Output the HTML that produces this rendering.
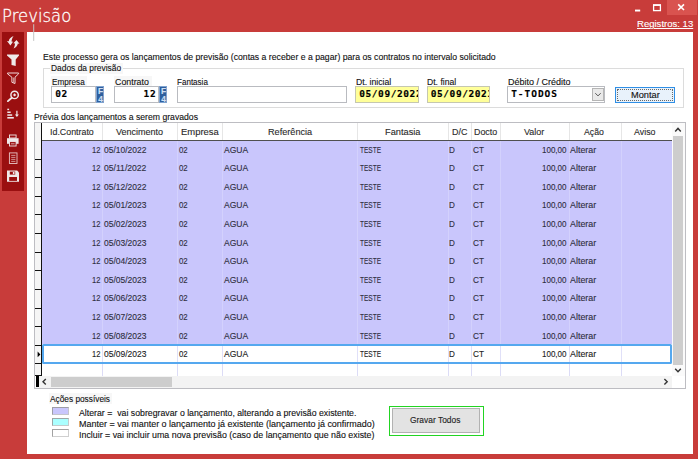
<!DOCTYPE html>
<html lang="pt-BR"><head><meta charset="utf-8"><title>Previsão</title>
<style>
html,body{margin:0;padding:0}
body{width:698px;height:459px;overflow:hidden;background:#c83c3a;position:relative}
.t{position:absolute;white-space:pre;line-height:20px;height:20px;transform-origin:0 0;-webkit-text-stroke:0.12px currentColor}
.a{position:absolute;box-sizing:border-box}
.inp{position:absolute;box-sizing:border-box;background:#fff;border:1px solid #b9bbc0}
.f4{position:absolute;box-sizing:border-box;background:#2f5f9e;border:1px solid #7fa3d0}
.lb{position:absolute;background:#f7f7f7}
</style></head><body>
<div class="a" style="left:667px;top:0px;width:30px;height:15px;background:#d9534f"></div>
<svg class="a" style="left:630px;top:0" width="68" height="16" viewBox="0 0 68 16"><rect x="5" y="9.6" width="5.2" height="1.9" fill="#fff"/><rect x="23.6" y="5.2" width="6.8" height="5.4" fill="none" stroke="#fff" stroke-width="1.3"/><rect x="23" y="4.2" width="8" height="1.6" fill="#fff"/><path d="M48.2 4.4 L54 10 M54 4.4 L48.2 10" stroke="#fff" stroke-width="1.6" fill="none"/></svg>
<div class="a" style="left:2px;top:32px;width:22px;height:159px;background:#9a0f10"></div>
<div class="a" style="left:27px;top:32px;width:666px;height:422px;background:#fff"></div>
<svg class="a" style="left:30px;top:20px" width="8" height="24" viewBox="30 20 8 24"><rect x="33.2" y="24.2" width="1" height="16.7" fill="#c4c4c4"/></svg>
<div class="a" style="left:43px;top:68px;width:641px;height:40px;border:1px solid #dcdcdc"></div>
<div class="lb" style="left:50px;top:63px;width:73px;height:11px;"></div>
<div class="lb" style="left:51px;top:76px;width:36px;height:11px;"></div>
<div class="lb" style="left:114px;top:76px;width:38px;height:11px;"></div>
<div class="inp" style="left:51px;top:86px;width:45px;height:17px;"></div>
<div class="f4" style="left:96px;top:86px;width:8px;height:17px;"></div>
<div class="inp" style="left:114px;top:86px;width:45px;height:17px;"></div>
<div class="f4" style="left:159px;top:86px;width:8px;height:17px;"></div>
<div class="inp" style="left:177px;top:86px;width:170px;height:17px;"></div>
<div class="inp" style="left:355px;top:86px;width:64px;height:17px;background:#ffff99;border-color:#c5c7b0"></div>
<div class="inp" style="left:427px;top:86px;width:63px;height:17px;background:#ffff99;border-color:#c5c7b0"></div>
<div class="inp" style="left:507px;top:86px;width:98px;height:17px;"></div>
<div class="a" style="left:592px;top:88px;width:12px;height:13px;background:#e9e9e9;border:1px solid #b5b5b5"></div>
<svg class="a" style="left:592px;top:88px" width="12" height="13" viewBox="0 0 12 13"><path d="M3.3 5.2 L6 7.9 L8.7 5.2" stroke="#555" stroke-width="1" fill="none"/></svg>
<div class="a" style="left:615px;top:87px;width:60px;height:16px;background:#e8f2fb;border:1px solid #2f8fe6"></div>
<div class="a" style="left:617px;top:89px;width:56px;height:12px;border:1px dotted #6a6a6a"></div>
<div class="a" style="left:34px;top:122px;width:652px;height:267px;background:#fff;border:1px solid #bdbdc2"></div>
<div class="a" style="left:42px;top:141px;width:630px;height:203px;background:#c9c6fc"></div>
<div class="a" style="left:102px;top:141px;width:1px;height:204px;background:#d3d1fd"></div>
<div class="a" style="left:102px;top:123px;width:1px;height:17px;background:#e6e6e6"></div>
<div class="a" style="left:102px;top:344px;width:1px;height:32px;background:#dcdcf6"></div>
<div class="a" style="left:177px;top:141px;width:1px;height:204px;background:#d3d1fd"></div>
<div class="a" style="left:177px;top:123px;width:1px;height:17px;background:#e6e6e6"></div>
<div class="a" style="left:177px;top:344px;width:1px;height:32px;background:#dcdcf6"></div>
<div class="a" style="left:222px;top:141px;width:1px;height:204px;background:#d3d1fd"></div>
<div class="a" style="left:222px;top:123px;width:1px;height:17px;background:#e6e6e6"></div>
<div class="a" style="left:222px;top:344px;width:1px;height:32px;background:#dcdcf6"></div>
<div class="a" style="left:357px;top:141px;width:1px;height:204px;background:#d3d1fd"></div>
<div class="a" style="left:357px;top:123px;width:1px;height:17px;background:#e6e6e6"></div>
<div class="a" style="left:357px;top:344px;width:1px;height:32px;background:#dcdcf6"></div>
<div class="a" style="left:448px;top:141px;width:1px;height:204px;background:#d3d1fd"></div>
<div class="a" style="left:448px;top:123px;width:1px;height:17px;background:#e6e6e6"></div>
<div class="a" style="left:448px;top:344px;width:1px;height:32px;background:#dcdcf6"></div>
<div class="a" style="left:471px;top:141px;width:1px;height:204px;background:#d3d1fd"></div>
<div class="a" style="left:471px;top:123px;width:1px;height:17px;background:#e6e6e6"></div>
<div class="a" style="left:471px;top:344px;width:1px;height:32px;background:#dcdcf6"></div>
<div class="a" style="left:500px;top:141px;width:1px;height:204px;background:#d3d1fd"></div>
<div class="a" style="left:500px;top:123px;width:1px;height:17px;background:#e6e6e6"></div>
<div class="a" style="left:500px;top:344px;width:1px;height:32px;background:#dcdcf6"></div>
<div class="a" style="left:569px;top:141px;width:1px;height:204px;background:#d3d1fd"></div>
<div class="a" style="left:569px;top:123px;width:1px;height:17px;background:#e6e6e6"></div>
<div class="a" style="left:569px;top:344px;width:1px;height:32px;background:#dcdcf6"></div>
<div class="a" style="left:621px;top:141px;width:1px;height:204px;background:#d3d1fd"></div>
<div class="a" style="left:621px;top:123px;width:1px;height:17px;background:#e6e6e6"></div>
<div class="a" style="left:621px;top:344px;width:1px;height:32px;background:#dcdcf6"></div>
<div class="a" style="left:42px;top:344px;width:630px;height:20px;background:#fff;border:2px solid #55a8ef;border-radius:1.5px"></div>
<div class="a" style="left:102px;top:346px;width:1px;height:16px;background:#e0e0f8"></div>
<div class="a" style="left:177px;top:346px;width:1px;height:16px;background:#e0e0f8"></div>
<div class="a" style="left:222px;top:346px;width:1px;height:16px;background:#e0e0f8"></div>
<div class="a" style="left:357px;top:346px;width:1px;height:16px;background:#e0e0f8"></div>
<div class="a" style="left:448px;top:346px;width:1px;height:16px;background:#e0e0f8"></div>
<div class="a" style="left:471px;top:346px;width:1px;height:16px;background:#e0e0f8"></div>
<div class="a" style="left:500px;top:346px;width:1px;height:16px;background:#e0e0f8"></div>
<div class="a" style="left:569px;top:346px;width:1px;height:16px;background:#e0e0f8"></div>
<div class="a" style="left:621px;top:346px;width:1px;height:16px;background:#e0e0f8"></div>
<div class="a" style="left:35px;top:140px;width:637px;height:1px;background:#505050"></div>
<div class="a" style="left:35px;top:123px;width:7px;height:253px;background:#f5f5f5"></div>
<div class="a" style="left:41px;top:123px;width:1px;height:253px;background:#111"></div>
<div class="a" style="left:35px;top:159px;width:7px;height:1px;background:#111"></div>
<div class="a" style="left:35px;top:177px;width:7px;height:1px;background:#111"></div>
<div class="a" style="left:35px;top:196px;width:7px;height:1px;background:#111"></div>
<div class="a" style="left:35px;top:214px;width:7px;height:1px;background:#111"></div>
<div class="a" style="left:35px;top:233px;width:7px;height:1px;background:#111"></div>
<div class="a" style="left:35px;top:252px;width:7px;height:1px;background:#111"></div>
<div class="a" style="left:35px;top:270px;width:7px;height:1px;background:#111"></div>
<div class="a" style="left:35px;top:289px;width:7px;height:1px;background:#111"></div>
<div class="a" style="left:35px;top:308px;width:7px;height:1px;background:#111"></div>
<div class="a" style="left:35px;top:326px;width:7px;height:1px;background:#111"></div>
<div class="a" style="left:35px;top:345px;width:7px;height:1px;background:#111"></div>
<div class="a" style="left:35px;top:363px;width:7px;height:1px;background:#111"></div>
<div class="a" style="left:35px;top:375px;width:7px;height:1px;background:#111"></div>
<svg class="a" style="left:35px;top:349.4px" width="6" height="10" viewBox="0 0 6 10"><path d="M2.6 2.6 L5.4 5.4 L2.6 8.2Z" fill="#000"/></svg>
<div class="a" style="left:672px;top:123px;width:13px;height:253px;background:#fafafa"></div>
<div class="a" style="left:673px;top:136px;width:10px;height:229px;background:#cdcdcd"></div>
<svg class="a" style="left:672px;top:123px" width="12" height="253" viewBox="0 0 12 253"><path d="M3.2 8.4 L6 5.4 L8.8 8.4" stroke="#333" stroke-width="1.4" fill="none"/><path d="M3.2 245.8 L6 248.8 L8.8 245.8" stroke="#333" stroke-width="1.4" fill="none"/></svg>
<div class="a" style="left:35px;top:376px;width:637px;height:12px;background:#f3f3f3"></div>
<div class="a" style="left:35px;top:376px;width:4px;height:11px;background:#fff"></div>
<div class="a" style="left:36px;top:376px;width:3px;height:11px;background:#000"></div>
<div class="a" style="left:51px;top:377px;width:121px;height:10px;background:#cdcdcd"></div>
<svg class="a" style="left:39px;top:376px" width="640" height="12" viewBox="0 0 640 12"><path d="M6.8 3 L4 5.8 L6.8 8.6" stroke="#333" stroke-width="1.4" fill="none"/><path d="M625.4 3 L628.2 5.8 L625.4 8.6" stroke="#333" stroke-width="1.4" fill="none"/></svg>
<div class="lb" style="left:49px;top:393px;width:63px;height:11px;"></div>
<div class="a" style="left:52px;top:407px;width:17px;height:8px;background:#c9c6fc;border:1px solid #c4c4cc;border-top-color:#9e9ea6;border-left-color:#9e9ea6"></div>
<div class="a" style="left:52px;top:418px;width:17px;height:8px;background:#aaffff;border:1px solid #c4cccc;border-top-color:#9ea6a6;border-left-color:#9ea6a6"></div>
<div class="a" style="left:52px;top:429px;width:17px;height:8px;background:#fff;border:1px solid #cfcfcf;border-top-color:#a2a2a2;border-left-color:#a2a2a2"></div>
<div class="a" style="left:389px;top:406px;width:95px;height:30px;border:1px solid #22d422"></div>
<div class="a" style="left:392px;top:408px;width:88px;height:25px;background:#e3e3e3;border:1px solid #b2b2b2"></div>
<svg class="a" style="left:2px;top:32px" width="22" height="159" viewBox="2 32 22 159" fill="none" stroke="none">
<g fill="#efe9e9">
<path d="M13.6 36 C10.6 37 9 39 8.8 41.2 L7 41 L10.4 45.4 L13 41.8 L11.5 41.6 C11.6 39.6 12.4 37.8 13.6 36Z"/>
<path d="M13.6 48.4 C16.4 47.4 17.6 45.6 17.8 43.6 L19.5 43.7 L16.5 39.9 L13.4 43.2 L15 43.4 C14.9 45.2 14.5 46.7 13.6 48.4Z"/>
<path d="M7 54.4 H19 V55.6 L15.7 59.5 V66 L11.5 64.9 V59.5 L7 55.6Z"/>
</g>
<path d="M7.5 73 H18.6 V73.8 L15 77.2 V83.5 L11.9 82.3 V77.2 L7.5 73.8Z" stroke="#f0dada" stroke-width="1"/>
<path d="M13.5 77.6 V82.6" stroke="#e8c6c6" stroke-width="0.7"/>
<circle cx="14.6" cy="94.9" r="3.7" stroke="#efe9e9" stroke-width="1.45"/>
<path d="M11.8 97.7 L7.9 101.1" stroke="#efe9e9" stroke-width="1.9" stroke-linecap="round"/>
<path d="M14.6 93.3 L16.2 94.9 L14.6 96.5 L13 94.9Z" fill="#efe9e9"/>
<g fill="#efe9e9">
<rect x="7.3" y="108.7" width="1.8" height="1.4"/><rect x="7.3" y="111.5" width="3.4" height="1.5"/><rect x="7.3" y="114.3" width="4.9" height="1.5"/><rect x="7.3" y="117" width="6.5" height="1.6"/>
<path d="M16.3 110.8 H17.5 V114.4 H18.9 L16.9 116.9 L14.9 114.4 H16.3Z"/>
<path d="M7 138.2 H18.6 V143.8 H7Z"/>
<path d="M7 170.6 H17.2 L19 172.4 V181.7 H7Z"/>
</g>
<rect x="9.5" y="135" width="6.6" height="3" fill="#9a0f10" stroke="#efe9e9" stroke-width="0.9"/>
<rect x="9.5" y="141.6" width="6.6" height="4.4" fill="#9a0f10" stroke="#efe9e9" stroke-width="0.9"/>
<path d="M11 143.8 H14.6" stroke="#efe9e9" stroke-width="0.7"/>
<rect x="9.4" y="152.9" width="7.6" height="10.6" stroke="#e8c6c6" stroke-width="0.9"/>
<path d="M11.2 155.4 H15.4 M11.2 157.4 H15.4 M11.2 159.4 H15.4 M11.2 161.4 H15.4" stroke="#e8c6c6" stroke-width="0.7"/>
<rect x="9.8" y="171.6" width="5.4" height="3" fill="#9a0f10"/>
<rect x="12.9" y="172" width="1.6" height="2.2" fill="#efe9e9"/>
<rect x="9.2" y="177" width="7.8" height="3.9" fill="#9a0f10"/>
</svg>
<span class="t" style="left:1.80px;top:5.70px;color:#fff;font-family:'DejaVu Sans Light', 'DejaVu Sans', 'Liberation Sans', sans-serif;font-size:18.2px;font-weight:normal;transform:scaleX(0.9048);-webkit-text-stroke:0.3px #fff;">Previsão</span>
<span class="t" style="left:636.80px;top:14.18px;color:#fff;font-family:'Liberation Sans', sans-serif;font-size:9.0px;font-weight:normal;transform:scaleX(1.0598);text-decoration:underline;">Registros: 13</span>
<span class="t" style="left:43.30px;top:46.68px;color:#111;font-family:'Liberation Sans', sans-serif;font-size:9.0px;font-weight:normal;transform:scaleX(0.9647);">Este processo gera os lançamentos de previsão (contas a receber e a pagar) para os contratos no intervalo solicitado</span>
<span class="t" style="left:50.90px;top:57.68px;color:#111;font-family:'Liberation Sans', sans-serif;font-size:9.0px;font-weight:normal;transform:scaleX(0.9341);">Dados da previsão</span>
<span class="t" style="left:52.00px;top:72.08px;color:#111;font-family:'Liberation Sans', sans-serif;font-size:9.0px;font-weight:normal;transform:scaleX(0.9079);">Empresa</span>
<span class="t" style="left:115.10px;top:72.08px;color:#111;font-family:'Liberation Sans', sans-serif;font-size:9.0px;font-weight:normal;transform:scaleX(0.9817);">Contrato</span>
<span class="t" style="left:177.40px;top:72.08px;color:#111;font-family:'Liberation Sans', sans-serif;font-size:9.0px;font-weight:normal;transform:scaleX(0.8948);">Fantasia</span>
<span class="t" style="left:356.30px;top:72.08px;color:#111;font-family:'Liberation Sans', sans-serif;font-size:9.0px;font-weight:normal;transform:scaleX(0.9667);">Dt. inicial</span>
<span class="t" style="left:427.40px;top:72.08px;color:#111;font-family:'Liberation Sans', sans-serif;font-size:9.0px;font-weight:normal;transform:scaleX(0.9569);">Dt. final</span>
<span class="t" style="left:507.60px;top:72.08px;color:#111;font-family:'Liberation Sans', sans-serif;font-size:9.0px;font-weight:normal;transform:scaleX(1.0011);">Débito / Crédito</span>
<span class="t" style="left:631.20px;top:85.08px;color:#111;font-family:'Liberation Sans', sans-serif;font-size:9.3px;font-weight:normal;transform:scaleX(0.9952);">Montar</span>
<span class="t" style="left:34.00px;top:106.58px;color:#111;font-family:'Liberation Sans', sans-serif;font-size:9.0px;font-weight:normal;transform:scaleX(0.9613);">Prévia dos lançamentos a serem gravados</span>
<span class="t" style="left:55.30px;top:84.01px;color:#000;font-family:'DejaVu Sans Mono', 'Liberation Mono', monospace;font-size:9.5px;font-weight:bold;letter-spacing:0.580px;">02</span>
<span class="t" style="left:143.59px;top:84.01px;color:#000;font-family:'DejaVu Sans Mono', 'Liberation Mono', monospace;font-size:9.5px;font-weight:bold;letter-spacing:0.580px;">12</span>
<span class="t" style="left:359.20px;top:84.01px;color:#000;font-family:'DejaVu Sans Mono', 'Liberation Mono', monospace;font-size:9.5px;font-weight:bold;letter-spacing:0.580px;width:59px;overflow:hidden;">05/09/2022</span>
<span class="t" style="left:430.70px;top:84.01px;color:#000;font-family:'DejaVu Sans Mono', 'Liberation Mono', monospace;font-size:9.5px;font-weight:bold;letter-spacing:0.580px;width:58.6px;overflow:hidden;">05/09/2023</span>
<span class="t" style="left:511.20px;top:84.01px;color:#000;font-family:'DejaVu Sans Mono', 'Liberation Mono', monospace;font-size:9.5px;font-weight:bold;letter-spacing:0.965px;">T-TODOS</span>
<span class="t" style="left:97.94px;top:81.09px;color:#d0e0f4;font-family:'Liberation Sans', sans-serif;font-size:8.4px;font-weight:bold;">F</span>
<span class="t" style="left:98.16px;top:88.69px;color:#d0e0f4;font-family:'Liberation Sans', sans-serif;font-size:8.4px;font-weight:bold;">4</span>
<span class="t" style="left:160.94px;top:81.09px;color:#d0e0f4;font-family:'Liberation Sans', sans-serif;font-size:8.4px;font-weight:bold;">F</span>
<span class="t" style="left:161.16px;top:88.69px;color:#d0e0f4;font-family:'Liberation Sans', sans-serif;font-size:8.4px;font-weight:bold;">4</span>
<span class="t" style="left:50.00px;top:121.58px;color:#2b2b2b;font-family:'Liberation Sans', sans-serif;font-size:9.0px;font-weight:normal;transform:scaleX(0.9836);">Id.Contrato</span>
<span class="t" style="left:116.10px;top:121.58px;color:#2b2b2b;font-family:'Liberation Sans', sans-serif;font-size:9.0px;font-weight:normal;transform:scaleX(1.0015);">Vencimento</span>
<span class="t" style="left:181.20px;top:121.58px;color:#2b2b2b;font-family:'Liberation Sans', sans-serif;font-size:9.0px;font-weight:normal;transform:scaleX(1.0495);">Empresa</span>
<span class="t" style="left:268.10px;top:121.58px;color:#2b2b2b;font-family:'Liberation Sans', sans-serif;font-size:9.0px;font-weight:normal;transform:scaleX(1.0154);">Referência</span>
<span class="t" style="left:384.50px;top:121.58px;color:#2b2b2b;font-family:'Liberation Sans', sans-serif;font-size:9.0px;font-weight:normal;transform:scaleX(1.0281);">Fantasia</span>
<span class="t" style="left:451.70px;top:121.58px;color:#2b2b2b;font-family:'Liberation Sans', sans-serif;font-size:9.0px;font-weight:normal;transform:scaleX(0.9935);">D/C</span>
<span class="t" style="left:473.80px;top:121.58px;color:#2b2b2b;font-family:'Liberation Sans', sans-serif;font-size:9.0px;font-weight:normal;transform:scaleX(0.9866);">Docto</span>
<span class="t" style="left:523.50px;top:121.58px;color:#2b2b2b;font-family:'Liberation Sans', sans-serif;font-size:9.0px;font-weight:normal;transform:scaleX(0.9978);">Valor</span>
<span class="t" style="left:584.00px;top:121.58px;color:#2b2b2b;font-family:'Liberation Sans', sans-serif;font-size:9.0px;font-weight:normal;transform:scaleX(0.9700);">Ação</span>
<span class="t" style="left:634.20px;top:121.58px;color:#2b2b2b;font-family:'Liberation Sans', sans-serif;font-size:9.0px;font-weight:normal;transform:scaleX(0.9836);">Aviso</span>
<span class="t" style="left:91.80px;top:139.68px;color:#2e2e3c;font-family:'Liberation Sans', sans-serif;font-size:9.3px;font-weight:normal;transform:scaleX(0.8121);">12</span>
<span class="t" style="left:104.00px;top:139.68px;color:#2e2e3c;font-family:'Liberation Sans', sans-serif;font-size:9.3px;font-weight:normal;transform:scaleX(0.9112);">05/10/2022</span>
<span class="t" style="left:179.00px;top:139.68px;color:#2e2e3c;font-family:'Liberation Sans', sans-serif;font-size:9.3px;font-weight:normal;transform:scaleX(0.8411);">02</span>
<span class="t" style="left:224.20px;top:139.68px;color:#2e2e3c;font-family:'Liberation Sans', sans-serif;font-size:9.3px;font-weight:normal;transform:scaleX(0.9181);">AGUA</span>
<span class="t" style="left:360.00px;top:139.68px;color:#2e2e3c;font-family:'Liberation Sans', sans-serif;font-size:9.3px;font-weight:normal;transform:scaleX(0.7007);">TESTE</span>
<span class="t" style="left:449.30px;top:139.68px;color:#2e2e3c;font-family:'Liberation Sans', sans-serif;font-size:9.3px;font-weight:normal;transform:scaleX(0.8781);">D</span>
<span class="t" style="left:472.50px;top:139.68px;color:#2e2e3c;font-family:'Liberation Sans', sans-serif;font-size:9.3px;font-weight:normal;transform:scaleX(0.8866);">CT</span>
<span class="t" style="left:542.20px;top:139.68px;color:#2e2e3c;font-family:'Liberation Sans', sans-serif;font-size:9.3px;font-weight:normal;transform:scaleX(0.8615);">100,00</span>
<span class="t" style="left:570.30px;top:139.68px;color:#2e2e3c;font-family:'Liberation Sans', sans-serif;font-size:9.3px;font-weight:normal;transform:scaleX(0.9565);">Alterar</span>
<span class="t" style="left:91.80px;top:158.28px;color:#2e2e3c;font-family:'Liberation Sans', sans-serif;font-size:9.3px;font-weight:normal;transform:scaleX(0.8121);">12</span>
<span class="t" style="left:104.00px;top:158.28px;color:#2e2e3c;font-family:'Liberation Sans', sans-serif;font-size:9.3px;font-weight:normal;transform:scaleX(0.9249);">05/11/2022</span>
<span class="t" style="left:179.00px;top:158.28px;color:#2e2e3c;font-family:'Liberation Sans', sans-serif;font-size:9.3px;font-weight:normal;transform:scaleX(0.8411);">02</span>
<span class="t" style="left:224.20px;top:158.28px;color:#2e2e3c;font-family:'Liberation Sans', sans-serif;font-size:9.3px;font-weight:normal;transform:scaleX(0.9181);">AGUA</span>
<span class="t" style="left:360.00px;top:158.28px;color:#2e2e3c;font-family:'Liberation Sans', sans-serif;font-size:9.3px;font-weight:normal;transform:scaleX(0.7007);">TESTE</span>
<span class="t" style="left:449.30px;top:158.28px;color:#2e2e3c;font-family:'Liberation Sans', sans-serif;font-size:9.3px;font-weight:normal;transform:scaleX(0.8781);">D</span>
<span class="t" style="left:472.50px;top:158.28px;color:#2e2e3c;font-family:'Liberation Sans', sans-serif;font-size:9.3px;font-weight:normal;transform:scaleX(0.8866);">CT</span>
<span class="t" style="left:542.20px;top:158.28px;color:#2e2e3c;font-family:'Liberation Sans', sans-serif;font-size:9.3px;font-weight:normal;transform:scaleX(0.8615);">100,00</span>
<span class="t" style="left:570.30px;top:158.28px;color:#2e2e3c;font-family:'Liberation Sans', sans-serif;font-size:9.3px;font-weight:normal;transform:scaleX(0.9565);">Alterar</span>
<span class="t" style="left:91.80px;top:176.88px;color:#2e2e3c;font-family:'Liberation Sans', sans-serif;font-size:9.3px;font-weight:normal;transform:scaleX(0.8121);">12</span>
<span class="t" style="left:104.00px;top:176.88px;color:#2e2e3c;font-family:'Liberation Sans', sans-serif;font-size:9.3px;font-weight:normal;transform:scaleX(0.9112);">05/12/2022</span>
<span class="t" style="left:179.00px;top:176.88px;color:#2e2e3c;font-family:'Liberation Sans', sans-serif;font-size:9.3px;font-weight:normal;transform:scaleX(0.8411);">02</span>
<span class="t" style="left:224.20px;top:176.88px;color:#2e2e3c;font-family:'Liberation Sans', sans-serif;font-size:9.3px;font-weight:normal;transform:scaleX(0.9181);">AGUA</span>
<span class="t" style="left:360.00px;top:176.88px;color:#2e2e3c;font-family:'Liberation Sans', sans-serif;font-size:9.3px;font-weight:normal;transform:scaleX(0.7007);">TESTE</span>
<span class="t" style="left:449.30px;top:176.88px;color:#2e2e3c;font-family:'Liberation Sans', sans-serif;font-size:9.3px;font-weight:normal;transform:scaleX(0.8781);">D</span>
<span class="t" style="left:472.50px;top:176.88px;color:#2e2e3c;font-family:'Liberation Sans', sans-serif;font-size:9.3px;font-weight:normal;transform:scaleX(0.8866);">CT</span>
<span class="t" style="left:542.20px;top:176.88px;color:#2e2e3c;font-family:'Liberation Sans', sans-serif;font-size:9.3px;font-weight:normal;transform:scaleX(0.8615);">100,00</span>
<span class="t" style="left:570.30px;top:176.88px;color:#2e2e3c;font-family:'Liberation Sans', sans-serif;font-size:9.3px;font-weight:normal;transform:scaleX(0.9565);">Alterar</span>
<span class="t" style="left:91.80px;top:195.48px;color:#2e2e3c;font-family:'Liberation Sans', sans-serif;font-size:9.3px;font-weight:normal;transform:scaleX(0.8121);">12</span>
<span class="t" style="left:104.00px;top:195.48px;color:#2e2e3c;font-family:'Liberation Sans', sans-serif;font-size:9.3px;font-weight:normal;transform:scaleX(0.9112);">05/01/2023</span>
<span class="t" style="left:179.00px;top:195.48px;color:#2e2e3c;font-family:'Liberation Sans', sans-serif;font-size:9.3px;font-weight:normal;transform:scaleX(0.8411);">02</span>
<span class="t" style="left:224.20px;top:195.48px;color:#2e2e3c;font-family:'Liberation Sans', sans-serif;font-size:9.3px;font-weight:normal;transform:scaleX(0.9181);">AGUA</span>
<span class="t" style="left:360.00px;top:195.48px;color:#2e2e3c;font-family:'Liberation Sans', sans-serif;font-size:9.3px;font-weight:normal;transform:scaleX(0.7007);">TESTE</span>
<span class="t" style="left:449.30px;top:195.48px;color:#2e2e3c;font-family:'Liberation Sans', sans-serif;font-size:9.3px;font-weight:normal;transform:scaleX(0.8781);">D</span>
<span class="t" style="left:472.50px;top:195.48px;color:#2e2e3c;font-family:'Liberation Sans', sans-serif;font-size:9.3px;font-weight:normal;transform:scaleX(0.8866);">CT</span>
<span class="t" style="left:542.20px;top:195.48px;color:#2e2e3c;font-family:'Liberation Sans', sans-serif;font-size:9.3px;font-weight:normal;transform:scaleX(0.8615);">100,00</span>
<span class="t" style="left:570.30px;top:195.48px;color:#2e2e3c;font-family:'Liberation Sans', sans-serif;font-size:9.3px;font-weight:normal;transform:scaleX(0.9565);">Alterar</span>
<span class="t" style="left:91.80px;top:214.08px;color:#2e2e3c;font-family:'Liberation Sans', sans-serif;font-size:9.3px;font-weight:normal;transform:scaleX(0.8121);">12</span>
<span class="t" style="left:104.00px;top:214.08px;color:#2e2e3c;font-family:'Liberation Sans', sans-serif;font-size:9.3px;font-weight:normal;transform:scaleX(0.9112);">05/02/2023</span>
<span class="t" style="left:179.00px;top:214.08px;color:#2e2e3c;font-family:'Liberation Sans', sans-serif;font-size:9.3px;font-weight:normal;transform:scaleX(0.8411);">02</span>
<span class="t" style="left:224.20px;top:214.08px;color:#2e2e3c;font-family:'Liberation Sans', sans-serif;font-size:9.3px;font-weight:normal;transform:scaleX(0.9181);">AGUA</span>
<span class="t" style="left:360.00px;top:214.08px;color:#2e2e3c;font-family:'Liberation Sans', sans-serif;font-size:9.3px;font-weight:normal;transform:scaleX(0.7007);">TESTE</span>
<span class="t" style="left:449.30px;top:214.08px;color:#2e2e3c;font-family:'Liberation Sans', sans-serif;font-size:9.3px;font-weight:normal;transform:scaleX(0.8781);">D</span>
<span class="t" style="left:472.50px;top:214.08px;color:#2e2e3c;font-family:'Liberation Sans', sans-serif;font-size:9.3px;font-weight:normal;transform:scaleX(0.8866);">CT</span>
<span class="t" style="left:542.20px;top:214.08px;color:#2e2e3c;font-family:'Liberation Sans', sans-serif;font-size:9.3px;font-weight:normal;transform:scaleX(0.8615);">100,00</span>
<span class="t" style="left:570.30px;top:214.08px;color:#2e2e3c;font-family:'Liberation Sans', sans-serif;font-size:9.3px;font-weight:normal;transform:scaleX(0.9565);">Alterar</span>
<span class="t" style="left:91.80px;top:232.68px;color:#2e2e3c;font-family:'Liberation Sans', sans-serif;font-size:9.3px;font-weight:normal;transform:scaleX(0.8121);">12</span>
<span class="t" style="left:104.00px;top:232.68px;color:#2e2e3c;font-family:'Liberation Sans', sans-serif;font-size:9.3px;font-weight:normal;transform:scaleX(0.9112);">05/03/2023</span>
<span class="t" style="left:179.00px;top:232.68px;color:#2e2e3c;font-family:'Liberation Sans', sans-serif;font-size:9.3px;font-weight:normal;transform:scaleX(0.8411);">02</span>
<span class="t" style="left:224.20px;top:232.68px;color:#2e2e3c;font-family:'Liberation Sans', sans-serif;font-size:9.3px;font-weight:normal;transform:scaleX(0.9181);">AGUA</span>
<span class="t" style="left:360.00px;top:232.68px;color:#2e2e3c;font-family:'Liberation Sans', sans-serif;font-size:9.3px;font-weight:normal;transform:scaleX(0.7007);">TESTE</span>
<span class="t" style="left:449.30px;top:232.68px;color:#2e2e3c;font-family:'Liberation Sans', sans-serif;font-size:9.3px;font-weight:normal;transform:scaleX(0.8781);">D</span>
<span class="t" style="left:472.50px;top:232.68px;color:#2e2e3c;font-family:'Liberation Sans', sans-serif;font-size:9.3px;font-weight:normal;transform:scaleX(0.8866);">CT</span>
<span class="t" style="left:542.20px;top:232.68px;color:#2e2e3c;font-family:'Liberation Sans', sans-serif;font-size:9.3px;font-weight:normal;transform:scaleX(0.8615);">100,00</span>
<span class="t" style="left:570.30px;top:232.68px;color:#2e2e3c;font-family:'Liberation Sans', sans-serif;font-size:9.3px;font-weight:normal;transform:scaleX(0.9565);">Alterar</span>
<span class="t" style="left:91.80px;top:251.28px;color:#2e2e3c;font-family:'Liberation Sans', sans-serif;font-size:9.3px;font-weight:normal;transform:scaleX(0.8121);">12</span>
<span class="t" style="left:104.00px;top:251.28px;color:#2e2e3c;font-family:'Liberation Sans', sans-serif;font-size:9.3px;font-weight:normal;transform:scaleX(0.9112);">05/04/2023</span>
<span class="t" style="left:179.00px;top:251.28px;color:#2e2e3c;font-family:'Liberation Sans', sans-serif;font-size:9.3px;font-weight:normal;transform:scaleX(0.8411);">02</span>
<span class="t" style="left:224.20px;top:251.28px;color:#2e2e3c;font-family:'Liberation Sans', sans-serif;font-size:9.3px;font-weight:normal;transform:scaleX(0.9181);">AGUA</span>
<span class="t" style="left:360.00px;top:251.28px;color:#2e2e3c;font-family:'Liberation Sans', sans-serif;font-size:9.3px;font-weight:normal;transform:scaleX(0.7007);">TESTE</span>
<span class="t" style="left:449.30px;top:251.28px;color:#2e2e3c;font-family:'Liberation Sans', sans-serif;font-size:9.3px;font-weight:normal;transform:scaleX(0.8781);">D</span>
<span class="t" style="left:472.50px;top:251.28px;color:#2e2e3c;font-family:'Liberation Sans', sans-serif;font-size:9.3px;font-weight:normal;transform:scaleX(0.8866);">CT</span>
<span class="t" style="left:542.20px;top:251.28px;color:#2e2e3c;font-family:'Liberation Sans', sans-serif;font-size:9.3px;font-weight:normal;transform:scaleX(0.8615);">100,00</span>
<span class="t" style="left:570.30px;top:251.28px;color:#2e2e3c;font-family:'Liberation Sans', sans-serif;font-size:9.3px;font-weight:normal;transform:scaleX(0.9565);">Alterar</span>
<span class="t" style="left:91.80px;top:269.88px;color:#2e2e3c;font-family:'Liberation Sans', sans-serif;font-size:9.3px;font-weight:normal;transform:scaleX(0.8121);">12</span>
<span class="t" style="left:104.00px;top:269.88px;color:#2e2e3c;font-family:'Liberation Sans', sans-serif;font-size:9.3px;font-weight:normal;transform:scaleX(0.9112);">05/05/2023</span>
<span class="t" style="left:179.00px;top:269.88px;color:#2e2e3c;font-family:'Liberation Sans', sans-serif;font-size:9.3px;font-weight:normal;transform:scaleX(0.8411);">02</span>
<span class="t" style="left:224.20px;top:269.88px;color:#2e2e3c;font-family:'Liberation Sans', sans-serif;font-size:9.3px;font-weight:normal;transform:scaleX(0.9181);">AGUA</span>
<span class="t" style="left:360.00px;top:269.88px;color:#2e2e3c;font-family:'Liberation Sans', sans-serif;font-size:9.3px;font-weight:normal;transform:scaleX(0.7007);">TESTE</span>
<span class="t" style="left:449.30px;top:269.88px;color:#2e2e3c;font-family:'Liberation Sans', sans-serif;font-size:9.3px;font-weight:normal;transform:scaleX(0.8781);">D</span>
<span class="t" style="left:472.50px;top:269.88px;color:#2e2e3c;font-family:'Liberation Sans', sans-serif;font-size:9.3px;font-weight:normal;transform:scaleX(0.8866);">CT</span>
<span class="t" style="left:542.20px;top:269.88px;color:#2e2e3c;font-family:'Liberation Sans', sans-serif;font-size:9.3px;font-weight:normal;transform:scaleX(0.8615);">100,00</span>
<span class="t" style="left:570.30px;top:269.88px;color:#2e2e3c;font-family:'Liberation Sans', sans-serif;font-size:9.3px;font-weight:normal;transform:scaleX(0.9565);">Alterar</span>
<span class="t" style="left:91.80px;top:288.48px;color:#2e2e3c;font-family:'Liberation Sans', sans-serif;font-size:9.3px;font-weight:normal;transform:scaleX(0.8121);">12</span>
<span class="t" style="left:104.00px;top:288.48px;color:#2e2e3c;font-family:'Liberation Sans', sans-serif;font-size:9.3px;font-weight:normal;transform:scaleX(0.9112);">05/06/2023</span>
<span class="t" style="left:179.00px;top:288.48px;color:#2e2e3c;font-family:'Liberation Sans', sans-serif;font-size:9.3px;font-weight:normal;transform:scaleX(0.8411);">02</span>
<span class="t" style="left:224.20px;top:288.48px;color:#2e2e3c;font-family:'Liberation Sans', sans-serif;font-size:9.3px;font-weight:normal;transform:scaleX(0.9181);">AGUA</span>
<span class="t" style="left:360.00px;top:288.48px;color:#2e2e3c;font-family:'Liberation Sans', sans-serif;font-size:9.3px;font-weight:normal;transform:scaleX(0.7007);">TESTE</span>
<span class="t" style="left:449.30px;top:288.48px;color:#2e2e3c;font-family:'Liberation Sans', sans-serif;font-size:9.3px;font-weight:normal;transform:scaleX(0.8781);">D</span>
<span class="t" style="left:472.50px;top:288.48px;color:#2e2e3c;font-family:'Liberation Sans', sans-serif;font-size:9.3px;font-weight:normal;transform:scaleX(0.8866);">CT</span>
<span class="t" style="left:542.20px;top:288.48px;color:#2e2e3c;font-family:'Liberation Sans', sans-serif;font-size:9.3px;font-weight:normal;transform:scaleX(0.8615);">100,00</span>
<span class="t" style="left:570.30px;top:288.48px;color:#2e2e3c;font-family:'Liberation Sans', sans-serif;font-size:9.3px;font-weight:normal;transform:scaleX(0.9565);">Alterar</span>
<span class="t" style="left:91.80px;top:307.08px;color:#2e2e3c;font-family:'Liberation Sans', sans-serif;font-size:9.3px;font-weight:normal;transform:scaleX(0.8121);">12</span>
<span class="t" style="left:104.00px;top:307.08px;color:#2e2e3c;font-family:'Liberation Sans', sans-serif;font-size:9.3px;font-weight:normal;transform:scaleX(0.9112);">05/07/2023</span>
<span class="t" style="left:179.00px;top:307.08px;color:#2e2e3c;font-family:'Liberation Sans', sans-serif;font-size:9.3px;font-weight:normal;transform:scaleX(0.8411);">02</span>
<span class="t" style="left:224.20px;top:307.08px;color:#2e2e3c;font-family:'Liberation Sans', sans-serif;font-size:9.3px;font-weight:normal;transform:scaleX(0.9181);">AGUA</span>
<span class="t" style="left:360.00px;top:307.08px;color:#2e2e3c;font-family:'Liberation Sans', sans-serif;font-size:9.3px;font-weight:normal;transform:scaleX(0.7007);">TESTE</span>
<span class="t" style="left:449.30px;top:307.08px;color:#2e2e3c;font-family:'Liberation Sans', sans-serif;font-size:9.3px;font-weight:normal;transform:scaleX(0.8781);">D</span>
<span class="t" style="left:472.50px;top:307.08px;color:#2e2e3c;font-family:'Liberation Sans', sans-serif;font-size:9.3px;font-weight:normal;transform:scaleX(0.8866);">CT</span>
<span class="t" style="left:542.20px;top:307.08px;color:#2e2e3c;font-family:'Liberation Sans', sans-serif;font-size:9.3px;font-weight:normal;transform:scaleX(0.8615);">100,00</span>
<span class="t" style="left:570.30px;top:307.08px;color:#2e2e3c;font-family:'Liberation Sans', sans-serif;font-size:9.3px;font-weight:normal;transform:scaleX(0.9565);">Alterar</span>
<span class="t" style="left:91.80px;top:325.68px;color:#2e2e3c;font-family:'Liberation Sans', sans-serif;font-size:9.3px;font-weight:normal;transform:scaleX(0.8121);">12</span>
<span class="t" style="left:104.00px;top:325.68px;color:#2e2e3c;font-family:'Liberation Sans', sans-serif;font-size:9.3px;font-weight:normal;transform:scaleX(0.9112);">05/08/2023</span>
<span class="t" style="left:179.00px;top:325.68px;color:#2e2e3c;font-family:'Liberation Sans', sans-serif;font-size:9.3px;font-weight:normal;transform:scaleX(0.8411);">02</span>
<span class="t" style="left:224.20px;top:325.68px;color:#2e2e3c;font-family:'Liberation Sans', sans-serif;font-size:9.3px;font-weight:normal;transform:scaleX(0.9181);">AGUA</span>
<span class="t" style="left:360.00px;top:325.68px;color:#2e2e3c;font-family:'Liberation Sans', sans-serif;font-size:9.3px;font-weight:normal;transform:scaleX(0.7007);">TESTE</span>
<span class="t" style="left:449.30px;top:325.68px;color:#2e2e3c;font-family:'Liberation Sans', sans-serif;font-size:9.3px;font-weight:normal;transform:scaleX(0.8781);">D</span>
<span class="t" style="left:472.50px;top:325.68px;color:#2e2e3c;font-family:'Liberation Sans', sans-serif;font-size:9.3px;font-weight:normal;transform:scaleX(0.8866);">CT</span>
<span class="t" style="left:542.20px;top:325.68px;color:#2e2e3c;font-family:'Liberation Sans', sans-serif;font-size:9.3px;font-weight:normal;transform:scaleX(0.8615);">100,00</span>
<span class="t" style="left:570.30px;top:325.68px;color:#2e2e3c;font-family:'Liberation Sans', sans-serif;font-size:9.3px;font-weight:normal;transform:scaleX(0.9565);">Alterar</span>
<span class="t" style="left:91.80px;top:344.28px;color:#1c1c1c;font-family:'Liberation Sans', sans-serif;font-size:9.3px;font-weight:normal;transform:scaleX(0.8121);">12</span>
<span class="t" style="left:104.00px;top:344.28px;color:#1c1c1c;font-family:'Liberation Sans', sans-serif;font-size:9.3px;font-weight:normal;transform:scaleX(0.9112);">05/09/2023</span>
<span class="t" style="left:179.00px;top:344.28px;color:#1c1c1c;font-family:'Liberation Sans', sans-serif;font-size:9.3px;font-weight:normal;transform:scaleX(0.8411);">02</span>
<span class="t" style="left:224.20px;top:344.28px;color:#1c1c1c;font-family:'Liberation Sans', sans-serif;font-size:9.3px;font-weight:normal;transform:scaleX(0.9181);">AGUA</span>
<span class="t" style="left:360.00px;top:344.28px;color:#1c1c1c;font-family:'Liberation Sans', sans-serif;font-size:9.3px;font-weight:normal;transform:scaleX(0.7007);">TESTE</span>
<span class="t" style="left:449.30px;top:344.28px;color:#1c1c1c;font-family:'Liberation Sans', sans-serif;font-size:9.3px;font-weight:normal;transform:scaleX(0.8781);">D</span>
<span class="t" style="left:472.50px;top:344.28px;color:#1c1c1c;font-family:'Liberation Sans', sans-serif;font-size:9.3px;font-weight:normal;transform:scaleX(0.8866);">CT</span>
<span class="t" style="left:542.20px;top:344.28px;color:#1c1c1c;font-family:'Liberation Sans', sans-serif;font-size:9.3px;font-weight:normal;transform:scaleX(0.8615);">100,00</span>
<span class="t" style="left:570.30px;top:344.28px;color:#1c1c1c;font-family:'Liberation Sans', sans-serif;font-size:9.3px;font-weight:normal;transform:scaleX(0.9565);">Alterar</span>
<span class="t" style="left:50.00px;top:388.68px;color:#111;font-family:'Liberation Sans', sans-serif;font-size:9.0px;font-weight:normal;transform:scaleX(0.9226);">Ações possíveis</span>
<span class="t" style="left:78.60px;top:402.88px;color:#111;font-family:'Liberation Sans', sans-serif;font-size:9.0px;font-weight:normal;transform:scaleX(0.9719);">Alterar =  vai sobregravar o lançamento, alterando a previsão existente.</span>
<span class="t" style="left:78.60px;top:413.88px;color:#111;font-family:'Liberation Sans', sans-serif;font-size:9.0px;font-weight:normal;transform:scaleX(0.9980);">Manter = vai manter o lançamento já existente (lançamento já confirmado)</span>
<span class="t" style="left:78.60px;top:424.78px;color:#111;font-family:'Liberation Sans', sans-serif;font-size:9.0px;font-weight:normal;transform:scaleX(0.9833);">Incluir = vai incluir uma nova previsão (caso de lançamento que não existe)</span>
<span class="t" style="left:409.90px;top:410.48px;color:#222;font-family:'Liberation Sans', sans-serif;font-size:9.0px;font-weight:normal;transform:scaleX(0.9358);">Gravar Todos</span>
</body></html>
